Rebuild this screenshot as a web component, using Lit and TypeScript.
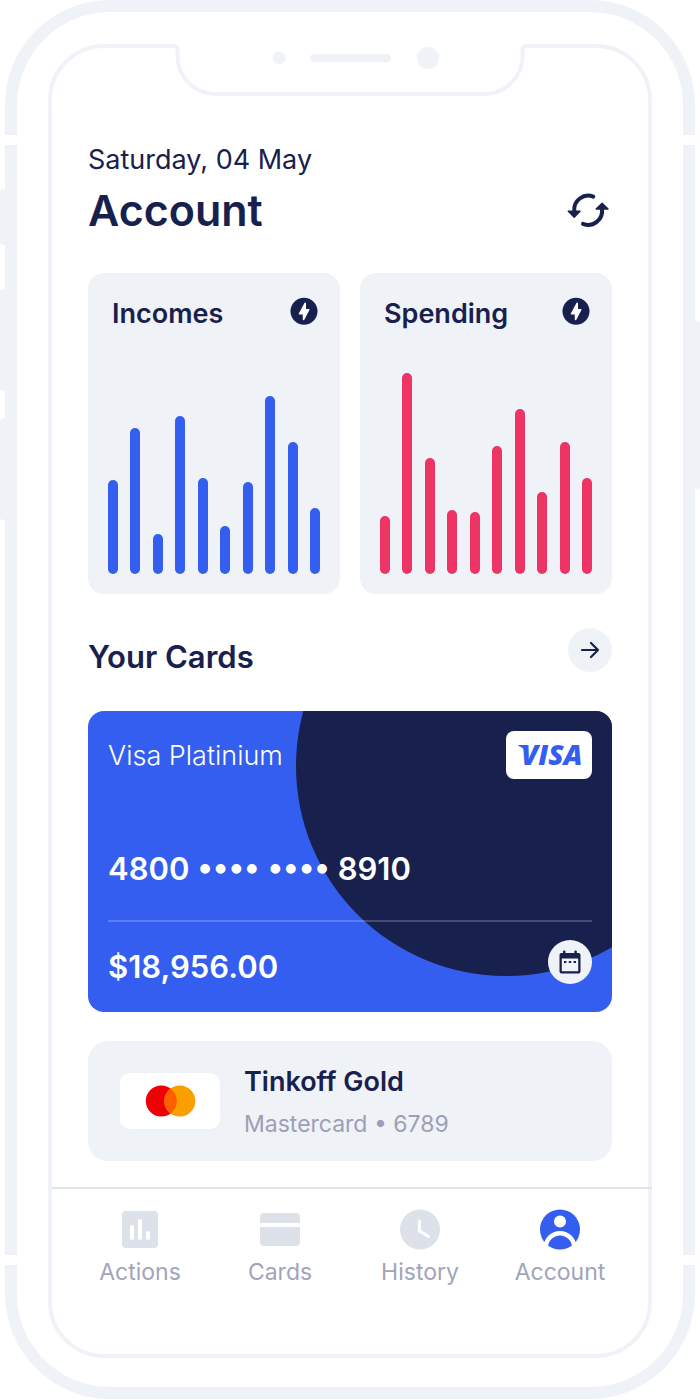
import { LitElement, html, css, svg } from "lit";
import { customElement, property } from "lit/decorators.js";
import { classMap } from "lit/directives/class-map.js";
import { styleMap } from "lit/directives/style-map.js";

const INCOMES = [94, 146, 40, 158, 96, 48, 92, 178, 132, 66];
const SPENDING = [58, 201, 116, 64, 62, 128, 165, 82, 132, 96];

const ICONS = {
  actions: svg`
    <rect x="2" y="2" width="36" height="37" rx="4" fill="#dde2ea" />
    <g fill="#fff">
      <rect x="10" y="16" width="4" height="15" rx="2" />
      <rect x="18" y="10" width="4" height="21" rx="2" />
      <rect x="26" y="22" width="4" height="9" rx="2" />
    </g>`,
  cards: svg`
    <path fill="#dde2ea" d="M4 4H36A4 4 0 0 1 40 8V14H0V8A4 4 0 0 1 4 4Z" />
    <path fill="#dde2ea" d="M0 18H40V33A4 4 0 0 1 36 37H4A4 4 0 0 1 0 33Z" />`,
  history: svg`
    <circle cx="20" cy="20.500" r="20" fill="#dde2ea" />
    <path d="M19.500 12V22L28.500 27.500" fill="none" stroke="#fff" stroke-width="3" stroke-linecap="round" stroke-linejoin="round" />`,
  account: svg`
    <circle cx="20" cy="20.500" r="20" fill="#335eef" />
    <circle cx="20" cy="12.500" r="6" fill="#fff" />
    <circle cx="20" cy="38.500" r="14.250" fill="none" stroke="#fff" stroke-width="4.500" />`,
};

type IconName = keyof typeof ICONS;

@customElement("bar-card")
class BarCard extends LitElement {
  @property() heading = "";
  @property() color = "";
  @property({ attribute: false }) values: number[] = [];

  static styles = css`
    :host {
      display: block;
      background: #eff2f7;
      border-radius: 16px;
    }
    .head {
      display: flex;
      justify-content: space-between;
      align-items: flex-start;
      padding: 24px 22px 0 24px;
    }
    .title {
      margin: 0;
      font-size: 27px;
      line-height: 34px;
      font-weight: 600;
    }
    .bolt {
      display: block;
      width: 28px;
      height: 28px;
    }
    .chart {
      display: flex;
      justify-content: space-between;
      align-items: flex-end;
      height: 243px;
      padding: 0 20px 20px;
    }
    .bar {
      width: 10px;
      border-radius: 5px;
    }
    .income {
      background: #335eef;
    }
    .spending {
      background: #ee3465;
    }
  `;

  render() {
    const tone = classMap({
      bar: true,
      income: this.color === "income",
      spending: this.color === "spending",
    });
    return html`
      <div class="head">
        <h2 class="title">${this.heading}</h2>
        <svg class="bolt" viewBox="0 0 28 28" aria-hidden="true">
          <circle cx="14" cy="14.300" r="13.500" fill="#18204d" />
          <path
            d="M14.600 5.800L8.800 16.600Q8.500 17.400 9.200 17.400H12.800V22.500Q13.200 23.800 14.400 22.800L19.500 12.800Q19.700 12 19 12H16V6.200Q15.400 5 14.600 5.800Z"
            fill="#fff"
          />
        </svg>
      </div>
      <div class="chart">
        ${this.values.map(
          (v) => html`<div class=${tone} style=${styleMap({ height: `${v}px` })}></div>`
        )}
      </div>
    `;
  }
}

@customElement("tab-link")
class TabLink extends LitElement {
  @property() icon: IconName = "actions";
  @property() label = "";

  static styles = css`
    :host {
      display: block;
      flex: 1;
    }
    .link {
      display: flex;
      flex-direction: column;
      align-items: center;
      gap: 7px;
      color: #a1a4ba;
      text-decoration: none;
      font-size: 23px;
      line-height: 32px;
    }
    .icon {
      width: 40px;
      height: 40px;
      overflow: visible;
    }
  `;

  render() {
    return html`
      <a class="link" href="#${this.icon}">
        <svg class="icon" viewBox="0 0 40 40" aria-hidden="true">${ICONS[this.icon]}</svg>
        <span>${this.label}</span>
      </a>
    `;
  }
}

@customElement("app-root")
class AppRoot extends LitElement {
  static styles = css`
    :host {
      display: block;
      background: #fff;
      color: #18204d;
      font-family: Inter, "Liberation Sans", sans-serif;
    }
    * {
      box-sizing: border-box;
    }
    .device {
      position: relative;
      margin: 0 5px;
      padding: 32px 31px 29px;
      border: 12px solid #eff2f7;
      border-radius: 105px;
    }
    .seam,
    .key {
      position: absolute;
      width: 12px;
    }
    .seam {
      height: 10px;
      background: #fff;
    }
    .key {
      width: 8px;
      background: #eff2f7;
      border-radius: 3px;
    }
    .left {
      left: -12px;
    }
    .right {
      right: -12px;
    }
    .key.left {
      left: -17px;
    }
    .key.right {
      right: -17px;
    }
    .upper {
      top: 123px;
    }
    .lower {
      bottom: 122px;
    }
    .mute {
      top: 177px;
      height: 56px;
    }
    .volume-up {
      top: 277px;
      height: 102px;
    }
    .volume-down {
      top: 406px;
      height: 102px;
    }
    .power {
      top: 309px;
      height: 168px;
    }
    .screen {
      position: relative;
      border: 4px solid #eff2f7;
      border-radius: 56px;
      padding-top: 94px;
    }
    .notch {
      position: absolute;
      top: -4px;
      left: 50%;
      margin-left: -176px;
      width: 352px;
      height: 56px;
    }
    .content {
      padding: 0 36px;
    }
    .date {
      margin: 0 0 4px;
      font-size: 27px;
      line-height: 36px;
    }
    .title-row {
      display: flex;
      justify-content: space-between;
      align-items: center;
    }
    .title {
      margin: 0;
      font-size: 43px;
      line-height: 56px;
      font-weight: 600;
    }
    button {
      display: block;
      padding: 0;
      border: 0;
      background: none;
      color: inherit;
      cursor: pointer;
    }
    button svg {
      display: block;
    }
    .round {
      width: 44px;
      height: 44px;
      border-radius: 50%;
      background: #eff2f7;
    }
    .charts {
      display: grid;
      grid-template-columns: 1fr 1fr;
      gap: 20px;
      margin-top: 35px;
    }
    .section-row {
      display: flex;
      justify-content: space-between;
      align-items: flex-end;
      margin-top: 34px;
    }
    .section-title {
      margin: 0;
      font-size: 31px;
      line-height: 30px;
      font-weight: 600;
    }
    .visa {
      position: relative;
      overflow: hidden;
      margin-top: 39px;
      border-radius: 16px;
      background: #335eef;
      color: #fff;
      padding: 20px 20px 28px;
    }
    .disc {
      position: absolute;
      top: -155px;
      right: -104px;
      width: 420px;
      height: 420px;
      border-radius: 50%;
      background: #18204d;
    }
    .visa-body {
      position: relative;
    }
    .visa-head {
      display: flex;
      justify-content: space-between;
      align-items: flex-end;
    }
    .visa-name {
      font-size: 27px;
      line-height: 46px;
      font-weight: 300;
    }
    .visa-logo {
      display: block;
      width: 86px;
      height: 48px;
      border-radius: 8px;
      background: #fff;
    }
    .logo-text {
      font: italic 800 28px "Open Sans", sans-serif;
    }
    .number {
      margin-top: 70px;
      font-size: 31px;
      line-height: 40px;
      font-weight: 600;
    }
    .visa-foot {
      display: flex;
      justify-content: space-between;
      align-items: flex-end;
      margin-top: 31px;
      padding-top: 18px;
      border-top: 2px solid rgba(255, 255, 255, 0.2);
    }
    .balance {
      font-size: 31px;
      line-height: 34px;
      font-weight: 600;
    }
    .gold {
      display: flex;
      align-items: flex-start;
      gap: 24px;
      margin-top: 29px;
      padding: 20px 32px 16px;
      border-radius: 20px;
      background: #eff2f7;
    }
    .mc-logo {
      display: block;
      width: 100px;
      height: 56px;
      margin-top: 12px;
      border-radius: 10px;
      background: #fff;
    }
    .gold-name {
      margin: 0;
      font-size: 27px;
      line-height: 42px;
      font-weight: 600;
    }
    .gold-info {
      margin: 0;
      font-size: 23px;
      line-height: 42px;
      color: #9c9fb6;
    }
    .tabs {
      display: flex;
      margin: 26px -4px 0 0;
      padding: 20px 22px 66px 18px;
      border-top: 2px solid #dfe4ea;
    }
  `;

  render() {
    return html`
      <div class="device">
        <div class="key left mute"></div>
        <div class="key left volume-up"></div>
        <div class="key left volume-down"></div>
        <div class="key right power"></div>
        <div class="seam left upper"></div>
        <div class="seam right upper"></div>
        <div class="seam left lower"></div>
        <div class="seam right lower"></div>

        <div class="screen">
          <svg class="notch" viewBox="0 0 352 56" aria-hidden="true">
            <rect x="3" width="346" height="12" fill="#fff" />
            <path
              d="M0 2Q3.500 2 3.500 6V12C3.500 33 20.500 50 41.500 50H310.500C331.500 50 348.500 33 348.500 12V6Q348.500 2 352 2"
              fill="#fff"
              stroke="#eff2f7"
              stroke-width="4"
            />
            <g fill="#eff2f7">
              <circle cx="105" cy="14" r="6.500" />
              <rect x="136" y="9.700" width="81" height="8.600" rx="4.300" />
              <circle cx="254" cy="14" r="11" />
            </g>
          </svg>

          <main class="content">
            <p class="date">Saturday, 04 May</p>
            <div class="title-row">
              <h1 class="title">Account</h1>
              <button aria-label="Refresh">
                <svg width="48" height="44" viewBox="0 0 48 44">
                  <g fill="none" stroke="#18204d" stroke-width="4" stroke-linecap="round">
                    <path d="M29.300 8.600A14 14 0 0 0 10.300 23" />
                    <path d="M19 35.900A14 14 0 0 0 38 21" />
                  </g>
                  <g fill="#18204d" stroke="#18204d" stroke-width="1.400" stroke-linejoin="round">
                    <path d="M4.300 23.300H16L10.200 29.200Z" />
                    <path d="M32.200 21.100H44L38.100 15.200Z" />
                  </g>
                </svg>
              </button>
            </div>

            <section class="charts">
              <bar-card heading="Incomes" color="income" .values=${INCOMES}></bar-card>
              <bar-card heading="Spending" color="spending" .values=${SPENDING}></bar-card>
            </section>

            <div class="section-row">
              <h2 class="section-title">Your Cards</h2>
              <button class="round" aria-label="All cards">
                <svg width="44" height="44" viewBox="0 0 44 44">
                  <path
                    d="M14 22H30M23 15L30 22L23 29"
                    fill="none"
                    stroke="#18204d"
                    stroke-width="2.200"
                    stroke-linecap="round"
                    stroke-linejoin="round"
                  />
                </svg>
              </button>
            </div>

            <article class="visa">
              <div class="disc"></div>
              <div class="visa-body">
                <div class="visa-head">
                  <span class="visa-name">Visa Platinium</span>
                  <svg class="visa-logo" viewBox="0 0 86 48" fill="#335eef">
                    <path d="M12 14H20L19 20Q16 16 12 14.600Z" />
                    <text class="logo-text" x="15" y="34">VISA</text>
                  </svg>
                </div>
                <div class="number">4800 •••• •••• 8910</div>
                <div class="visa-foot">
                  <span class="balance">$18,956.00</span>
                  <button class="round" aria-label="Schedule">
                    <svg width="44" height="44" viewBox="0 0 44 44" fill="#18204d">
                      <rect x="15" y="10.500" width="2.400" height="5" rx="1" />
                      <rect x="26.400" y="10.500" width="2.400" height="5" rx="1" />
                      <path
                        fill-rule="evenodd"
                        d="M13.500 13H30.500Q32.500 13 32.500 15V31.500Q32.500 33.500 30.500 33.500H13.500Q11.500 33.500 11.500 31.500V15Q11.500 13 13.500 13ZM13.800 18.600V31.200H30.200V18.600Z"
                      />
                      <rect x="16" y="21" width="2.400" height="2" />
                      <rect x="20.800" y="21" width="2.400" height="2" />
                      <rect x="25.600" y="21" width="2.400" height="2" />
                    </svg>
                  </button>
                </div>
              </div>
            </article>

            <article class="gold">
              <svg class="mc-logo" viewBox="0 0 100 56" aria-hidden="true">
                <circle cx="41.300" cy="28" r="15.500" fill="#ee0005" />
                <circle cx="59.800" cy="28" r="15.500" fill="#f9a000" />
                <path d="M50.550 15.560A15.500 15.500 0 0 1 50.550 40.440A15.500 15.500 0 0 1 50.550 15.560Z" fill="#ff5f00" />
              </svg>
              <div>
                <h3 class="gold-name">Tinkoff Gold</h3>
                <p class="gold-info">Mastercard • 6789</p>
              </div>
            </article>
          </main>

          <nav class="tabs">
            <tab-link icon="actions" label="Actions"></tab-link>
            <tab-link icon="cards" label="Cards"></tab-link>
            <tab-link icon="history" label="History"></tab-link>
            <tab-link icon="account" label="Account"></tab-link>
          </nav>
        </div>
      </div>
    `;
  }
}
